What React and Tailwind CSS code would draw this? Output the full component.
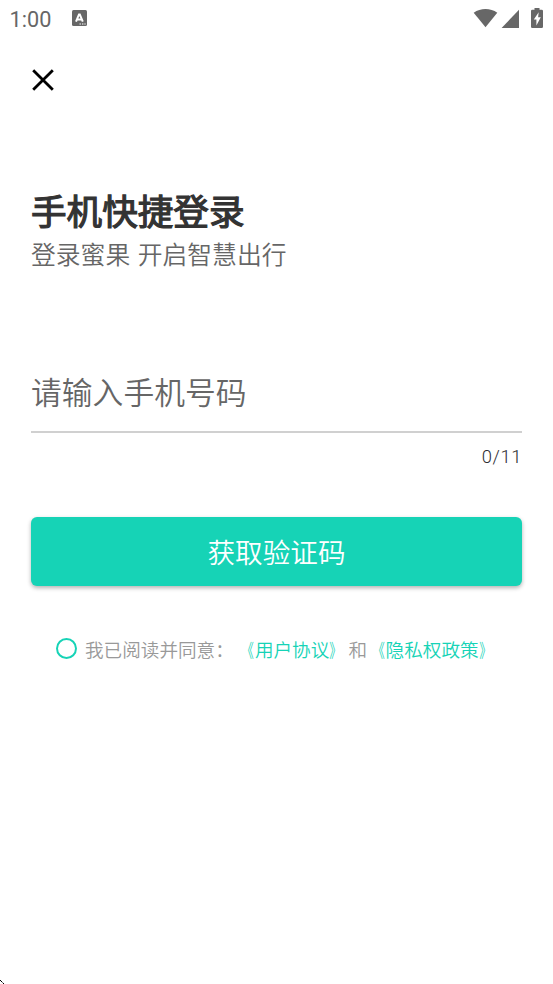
function StatusBar() {
  return (
    <header className="flex h-[38px] items-center pl-[9.5px] text-[#676767]">
      <span className="w-[62.5px] pt-[2px] font-['Roboto'] text-[21.7px] leading-[38px]">1:00</span>
      <svg className="mb-[2px] h-4 w-[15px]" viewBox="0 0 15 16">
        <rect width="15" height="16" rx="1.5" fill="#676767" />
        <path d="M4 11.6 7 4.4h.8L10.8 11.6M5.2 9.4h4.4" fill="none" stroke="#fff" strokeWidth="2" />
        <path d="M7.5 14h1.4M10 14h1.4M12.4 14h1.2" stroke="#fff" strokeWidth="1.1" />
      </svg>
      <svg className="ml-auto h-[38px] w-[80px]" viewBox="473 0 80 38" fill="#676767">
        <path d="M473.7 12.8C480.6 7.8 490.4 7.8 497.3 12.8L485.5 27.3Z" />
        <path d="M519 9.8V28H501.6Z" />
        <path d="M534.5 8h5v1.7h2.2q1.3 0 1.3 1.3v15.7q0 1.3-1.3 1.3h-9.4q-1.3 0-1.3-1.3V11q0-1.3 1.3-1.3h2.2Z" />
        <path d="M538.7 12.2 533.8 19.6h2.6v5.8l4.4-8.1h-2.7Z" fill="#fff" />
      </svg>
    </header>
  );
}

function AgreementLink({ children }) {
  return (
    <span className="text-[#16d3b6]">
      <span className="inline-block origin-[85%_50%] scale-x-[0.66]">《</span>
      {children}
      <span className="inline-block origin-[5%_50%] scale-x-[0.66]">》</span>
    </span>
  );
}

export default function App() {
  return (
    <div className="relative h-[984px] w-[553px] overflow-hidden bg-white font-['Noto_Sans_CJK_SC',sans-serif]">
      <StatusBar />
      <main className="px-[31px]">
        <button className="mt-[30px] block h-6 w-6" aria-label="关闭">
          <svg viewBox="0 0 24 24" className="h-6 w-6">
            <path d="m2.2 2.2 19.6 19.6M21.8 2.2 2.2 21.8" stroke="#000" strokeWidth="2.8" />
          </svg>
        </button>
        <h1 className="mt-[94px] h-[49px] text-[35.6px] leading-[48px] font-normal whitespace-nowrap text-[#333] [-webkit-text-stroke:1.2px_#333]">手机快捷登录</h1>
        <p className="h-[36px] text-[24.8px] leading-[36px] font-[350] whitespace-nowrap text-[#666] [word-spacing:2px]">登录蜜果 开启智慧出行</p>
        <div className="mt-[91px] h-[71px] border-b-2 border-[#d0d0d0] text-[30.8px] leading-[58px] font-[350] whitespace-nowrap text-[#666]">
          请输入手机号码
        </div>
        <div className="h-[46px] text-right font-['Roboto'] text-[18.4px] leading-[48px] font-[350] tracking-[0.6px] text-[#2c2c32]">0/11</div>
        <button className="mt-[38px] block h-[69px] w-full rounded-[6px] bg-[#16d3b6] text-center text-[27.6px] leading-[69px] font-[350] text-white shadow-[0_2px_4px_rgba(0,0,0,0.3)]">
          获取验证码
        </button>
        <div className="mt-[48px] flex h-[28px] items-center pl-[25px] text-[18.6px] leading-[28px] font-[350] whitespace-nowrap text-[#999]">
          <span className="mr-[8px] h-[21px] w-[21px] shrink-0 rounded-full border-2 border-[#16d3b6]" />
          <p className="flex pt-[2px] [text-spacing-trim:space-all]">
            <span className="mr-[2.5px]">我已阅读并同意：</span>
            <AgreementLink>用户协议</AgreementLink>
            <span className="ml-[0.5px]">和</span>
            <AgreementLink>隐私权政策</AgreementLink>
          </p>
        </div>
      </main>
      <svg className="absolute bottom-0 left-0 h-[5px] w-[5px]" viewBox="0 0 5 5">
        <path d="M0 1h1v1H0ZM1 2h1v1H1ZM3 4h1v1H3Z" fill="#000" />
        <path d="M2 3h1v1H2Z" fill="#777" />
      </svg>
    </div>
  );
}
